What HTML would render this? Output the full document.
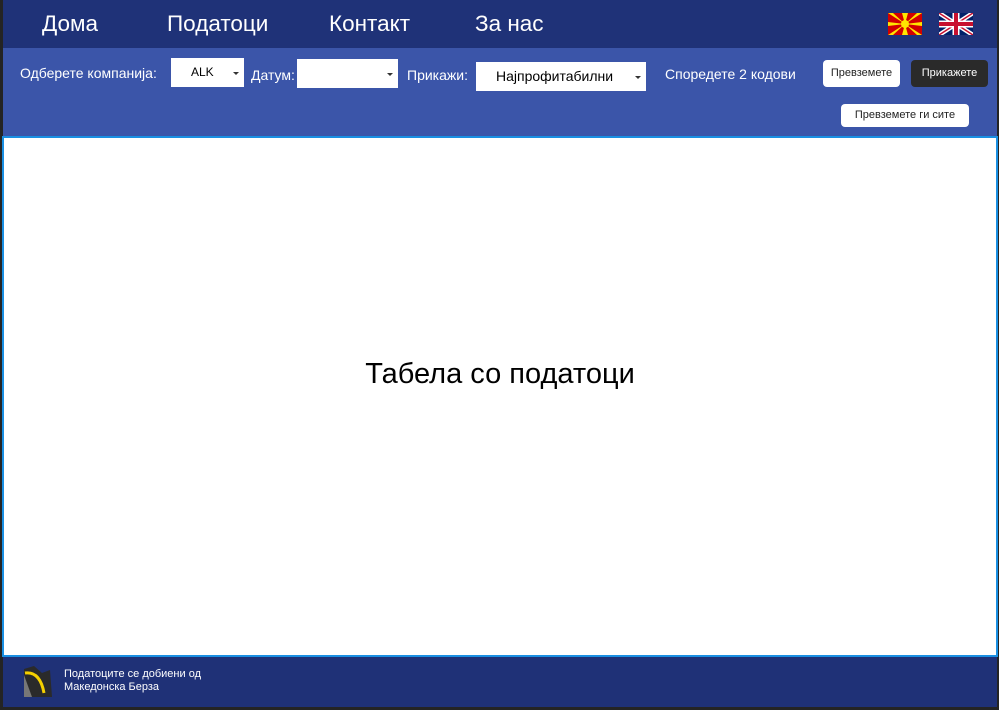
<!DOCTYPE html>
<html><head><meta charset="utf-8"><style>
*{margin:0;padding:0;box-sizing:border-box}
body{width:999px;height:710px;background:#242424;position:relative;overflow:hidden;font-family:"Liberation Sans","DejaVu Sans",sans-serif}
.nav{position:absolute;left:3px;top:0;width:994px;height:48px;background:#1f3278}
.nav a{position:absolute;top:11px;color:#fff;font-size:22.5px;text-decoration:none}
.bar{position:absolute;left:3px;top:48px;width:994px;height:88px;background:#3b55a9;color:#fff}
.t{position:absolute;font-size:14px;color:#fff}
.sel{position:absolute;background:#fff;color:#000;font-size:12px}
.sel:after{content:"";position:absolute;right:5px;top:50%;margin-top:-1px;border-left:3px solid transparent;border-right:3px solid transparent;border-top:3px solid #333}
.btn{position:absolute;border-radius:4px;font-size:11px;text-align:center}
.main{position:absolute;left:2px;top:136px;width:996px;height:521px;background:#fff;border:2px solid #1a8fe2}
.main div{position:absolute;left:0;right:0;top:220px;text-align:center;font-size:29px;color:#000}
.foot{position:absolute;left:3px;top:657px;width:994px;height:50px;background:#1f3177;color:#fff;font-size:11px}
</style></head><body>
<div class="nav">
<a style="left:39px">Дома</a><a style="left:164px">Податоци</a><a style="left:326px">Контакт</a><a style="left:472px">За нас</a>
<svg style="position:absolute;left:885px;top:13px" width="34" height="22" viewBox="0 0 34 22"><rect width="34" height="22" fill="#d20000"/><g fill="#ffe600"><polygon points="0,0 5,0 17,11"/><polygon points="34,0 29,0 17,11"/><polygon points="0,22 5,22 17,11"/><polygon points="34,22 29,22 17,11"/><polygon points="14,0 20,0 17,11"/><polygon points="14,22 20,22 17,11"/><polygon points="0,9 0,13 17,11"/><polygon points="34,9 34,13 17,11"/><circle cx="17" cy="11" r="4"/></g></svg>
<svg style="position:absolute;left:936px;top:13px" width="34" height="22" viewBox="0 0 34 22"><rect width="34" height="22" fill="#012169"/><path d="M0,0L34,22M34,0L0,22" stroke="#fff" stroke-width="4.5"/><path d="M0,0L34,22M34,0L0,22" stroke="#c8102e" stroke-width="1.5"/><path d="M17,0V22M0,11H34" stroke="#fff" stroke-width="7"/><path d="M17,0V22M0,11H34" stroke="#c8102e" stroke-width="4"/></svg>
</div>
<div class="bar">
<div class="t" style="left:17px;top:17px">Одберете компанија:</div>
<div class="sel" style="left:168px;top:10px;width:73px;height:29px;line-height:29px;padding-left:20px">ALK</div>
<div class="t" style="left:248px;top:19px">Датум:</div>
<div class="sel" style="left:294px;top:11px;width:101px;height:29px"></div>
<div class="t" style="left:404px;top:19px">Прикажи:</div>
<div class="sel" style="left:473px;top:14px;width:170px;height:29px;line-height:29px;padding-left:20px;font-size:14px">Најпрофитабилни</div>
<div class="t" style="left:662px;top:18px">Споредете 2 кодови</div>
<div class="btn" style="left:820px;top:12px;width:77px;height:27px;line-height:27px;background:#fff;color:#222">Превземете</div>
<div class="btn" style="left:908px;top:12px;width:77px;height:27px;line-height:27px;background:#2a2a2a;color:#fff">Прикажете</div>
<div class="btn" style="left:838px;top:56px;width:128px;height:23px;line-height:23px;background:#fff;color:#222">Превземете ги сите</div>
</div>
<div class="main"><div>Табела со податоци</div></div>
<div class="foot">
<svg style="position:absolute;left:17px;top:6px" width="36" height="36" viewBox="0 0 36 36"><path d="M4,6 L14,3 L22,10 L30,7 L32,34 L4,34 Z" fill="#2a2a2a"/><path d="M5,10 Q20,8 24,30" stroke="#f5d000" stroke-width="3" fill="none"/><path d="M4,12 L4,34 L12,34 Z" fill="#777"/></svg>
<div style="position:absolute;left:61px;top:11px;line-height:13px">Податоците се добиени од<br>Македонска Берза</div>
</div>
</body></html>
